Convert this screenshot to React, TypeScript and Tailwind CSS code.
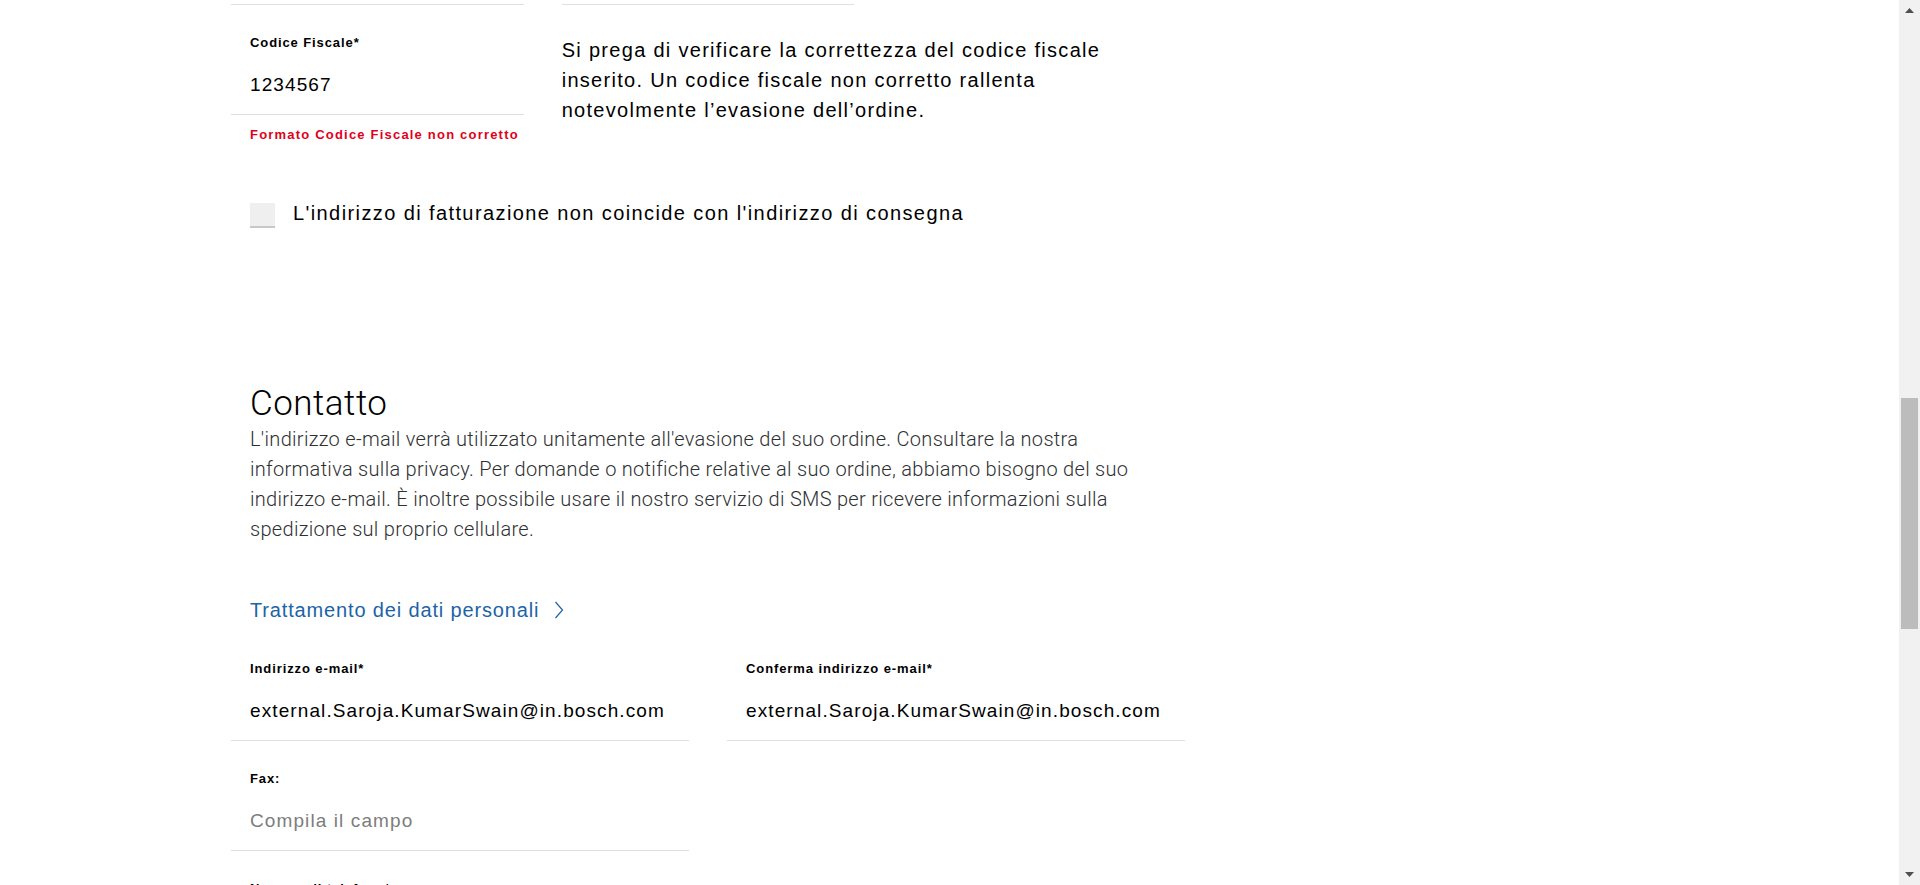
import React from 'react';

const Field: React.FC<{
  label: string;
  value: string;
  placeholder?: boolean;
  className?: string;
}> = ({ label, value, placeholder, className }) => (
  <div className={`border-b border-[#e0e0e0] pl-[19px] pt-[30px] pb-[17px] ${className ?? ''}`}>
    <div className="h-4 text-[13px] leading-4 font-bold tracking-[0.9px] text-black">{label}</div>
    <div
      className={`mt-[22px] text-[19px] leading-6 tracking-[1.1px] ${
        placeholder ? 'text-[#7d7d7d]' : 'text-black'
      }`}
    >
      {value}
    </div>
  </div>
);

const Scrollbar: React.FC = () => (
  <div className="flex w-[21px] shrink-0 flex-col bg-[#f1f1f1] pl-[2px] pr-[2px]">
    <div className="flex h-[21px] items-center justify-center">
      <svg width="9" height="5" viewBox="0 0 9 5">
        <path d="M0 5 L4.5 0 L9 5 Z" fill="#505050" />
      </svg>
    </div>
    <div className="h-[377px]" />
    <div className="h-[231px] bg-[#bcbcbc]" />
    <div className="flex-1" />
    <div className="flex h-[21px] items-center justify-center">
      <svg width="9" height="5" viewBox="0 0 9 5">
        <path d="M0 0 L9 0 L4.5 5 Z" fill="#505050" />
      </svg>
    </div>
  </div>
);

const App: React.FC = () => {
  return (
    <div className="flex h-[885px] w-full overflow-hidden bg-white font-['Liberation_Sans',Arial,sans-serif] text-black">
      <div className="flex-1 overflow-hidden">
        <div className="ml-[231px] w-[954px]">
          {/* Previous row bottoms */}
          <div className="grid grid-cols-12 gap-x-[38px]">
            <div className="col-span-4 h-[5px] border-b border-[#e0e0e0]" />
            <div className="col-span-4 h-[5px] border-b border-[#e0e0e0]" />
          </div>

          {/* Codice fiscale */}
          <div className="grid grid-cols-12 gap-x-[38px]">
            <div className="col-span-4">
              <Field label="Codice Fiscale*" value="1234567" />
              <p className="mt-[12px] pl-[19px] text-[13px] leading-4 font-bold tracking-[1.2px] text-[#e2001a]">
                Formato Codice Fiscale non corretto
              </p>
            </div>
            <div className="col-span-8 pt-[30px]">
              <p className="max-w-[580px] text-[20px] leading-[30px] tracking-[1.3px] text-black">
                Si prega di verificare la correttezza del codice fiscale inserito. Un codice fiscale non
                corretto rallenta notevolmente l’evasione dell’ordine.
              </p>
            </div>
          </div>

          {/* Billing address checkbox */}
          <label className="mt-[58px] flex items-center gap-[18px] pl-[19px]">
            <span className="h-[25px] w-[25px] border-b-2 border-[#c8c8c8] bg-[#efefef]" />
            <span className="mb-[4px] text-[20px] leading-6 tracking-[1.4px]">
              L'indirizzo di fatturazione non coincide con l'indirizzo di consegna
            </span>
          </label>

          {/* Contatto */}
          <div className="mt-[155px] pl-[19px]">
            <h2 className="font-['Roboto',sans-serif] text-[35px] leading-10 font-light tracking-[0.5px] text-black">
              Contatto
            </h2>
            <p className="max-w-[900px] font-['Roboto',sans-serif] text-[20px] leading-[30px] font-light tracking-[0.3px] text-[#2e3033]">
              L'indirizzo e-mail verrà utilizzato unitamente all'evasione del suo ordine. Consultare la nostra
              informativa sulla privacy. Per domande o notifiche relative al suo ordine, abbiamo bisogno del suo
              indirizzo e-mail. È inoltre possibile usare il nostro servizio di SMS per ricevere informazioni sulla
              spedizione sul proprio cellulare.
            </p>
            <a className="mt-[54px] flex items-center gap-[15px] text-[20px] leading-6 tracking-[0.85px] text-[#1b64a7]">
              Trattamento dei dati personali
              <svg width="10" height="18" viewBox="0 0 10 18" fill="none">
                <path d="M1.5 1 L8.5 9 L1.5 17" stroke="#1b64a7" strokeWidth="1.2" />
              </svg>
            </a>
          </div>

          {/* Email fields */}
          <div className="mt-[9px] grid grid-cols-12 gap-x-[38px]">
            <Field className="col-span-6" label="Indirizzo e-mail*" value="external.Saroja.KumarSwain@in.bosch.com" />
            <Field
              className="col-span-6"
              label="Conferma indirizzo e-mail*"
              value="external.Saroja.KumarSwain@in.bosch.com"
            />
            <Field className="col-span-6" label="Fax:" value="Compila il campo" placeholder />
            <div className="col-span-6" />
            <Field className="col-span-6" label="Numero di telefono*" value="Compila il campo" placeholder />
          </div>
        </div>
      </div>
      <Scrollbar />
    </div>
  );
};

export default App;
